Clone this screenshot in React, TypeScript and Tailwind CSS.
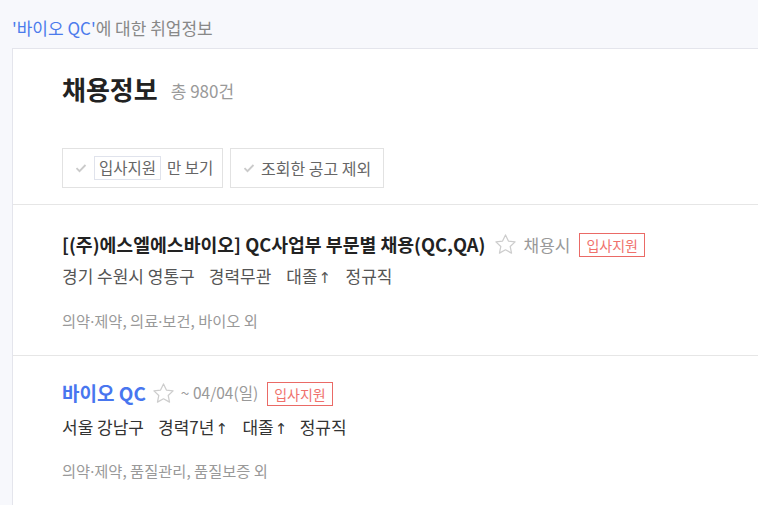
const font = { fontFamily: '"Noto Sans CJK KR", "Noto Sans", sans-serif' };

function Star() {
  return (
    <svg width="25" height="25" viewBox="0 0 24 24" className="-my-[3px] shrink-0">
      <path
        d="M12 2.8l2.8 5.9 6.4.8-4.7 4.4 1.3 6.4L12 17.1l-5.8 3.2 1.3-6.4-4.7-4.4 6.4-.8z"
        fill="none"
        stroke="#cdcdcd"
        strokeWidth="1.2"
        strokeLinejoin="round"
      />
    </svg>
  );
}

function Check() {
  return (
    <svg width="12" height="10" viewBox="0 0 12 10" className="shrink-0">
      <path d="M1.5 5.2l3 3 6-6.2" fill="none" stroke="#cacaca" strokeWidth="1.8" />
    </svg>
  );
}

function Dot() {
  return <span className="leading-none" style={{ fontFamily: '"Noto Sans", sans-serif' }}>·</span>;
}

// narrow arrow, the CJK one is full width
function Up() {
  return (
    <span className="ml-[1px] inline-block w-[9px] text-center text-[15px] leading-none" style={{ fontFamily: '"DejaVu Sans", sans-serif' }}>
      ↑
    </span>
  );
}

function ApplyBadge() {
  return (
    <span className="inline-flex h-[24px] items-center border border-[#ea6a66] px-[6px] text-[14px] leading-none text-[#f0716c]">
      입사지원
    </span>
  );
}

export default function App() {
  return (
    <div className="flex h-[505px] w-[758px] flex-col overflow-hidden bg-[#f7f8fc]" style={font}>
      <div className="flex h-[48px] items-center pl-[12px] pt-[6px] text-[17px] leading-none">
        <span className="text-[#4b7bec]">'바이오 QC'</span>
        <span className="text-[#888]">에 대한 취업정보</span>
      </div>

      <div className="ml-[12px] flex-1 border-l border-t border-[#e4e5ec] bg-white">
        <div className="px-[49px] pb-[16px]">
          <div className="flex h-[99px] items-start pt-[27px]">
            <h2 className="text-[26px] font-bold leading-none text-[#222]">채용정보</h2>
            <span className="ml-[13px] pt-[6px] text-[17px] leading-none text-[#999]">총 980건</span>
          </div>
          <div className="flex gap-[7px]">
            <button className="flex h-[40px] w-[161px] items-center border border-[#e2e2e2] pl-[12px] text-[15.5px] text-[#666]">
              <Check />
              <span className="ml-[7px] flex h-[24px] items-center border border-[#e0e3ec] px-[4px] leading-none">입사지원</span>
              <span className="ml-[6px] leading-none">만 보기</span>
            </button>
            <button className="flex h-[40px] w-[154px] items-center border border-[#e2e2e2] pl-[12px] text-[16px] leading-none text-[#666]">
              <Check />
              <span className="ml-[6px]">조회한 공고 제외</span>
            </button>
          </div>
        </div>

        <div className="border-t border-[#e6e6e6] px-[49px] pb-[26px] pt-[26px]">
          <div className="flex h-[26px] items-center">
            <span className="text-[18.3px] font-bold leading-[26px] text-[#222]">
              [(주)에스엘에스바이오] QC사업부 부문별 채용(QC,QA)
            </span>
            <span className="ml-[7px]"><Star /></span>
            <span className="ml-[6px] text-[17px] leading-none text-[#999]">채용시</span>
            <span className="ml-[9px]"><ApplyBadge /></span>
          </div>
          <div className="mt-[8px] flex h-[22px] items-center text-[17px] leading-[22px] text-[#555]">
            <span>경기 수원시 영통구</span>
            <span className="ml-[14px]">경력무관</span>
            <span className="ml-[15px]">대졸<Up /></span>
            <span className="ml-[18px]">정규직</span>
          </div>
          <div className="mt-[24px] flex h-[18px] items-center text-[15.3px] leading-[18px] text-[#999]">
            <span>의약<Dot />제약, 의료<Dot />보건, 바이오 외</span>
          </div>
        </div>

        <div className="border-t border-[#e6e6e6] px-[49px] pt-[24px]">
          <div className="flex h-[26px] items-center">
            <span className="text-[19px] font-bold leading-[26px] text-[#4876ef]">바이오 QC</span>
            <span className="ml-[5px]"><Star /></span>
            <span className="ml-[5px] text-[15.5px] leading-none text-[#999]">~ 04/04(일)</span>
            <span className="ml-[9px]"><ApplyBadge /></span>
          </div>
          <div className="mt-[10px] flex h-[22px] items-center text-[17px] leading-[22px] text-[#333]">
            <span>서울 강남구</span>
            <span className="ml-[14px]">경력7년<Up /></span>
            <span className="ml-[18px]">대졸<Up /></span>
            <span className="ml-[16px]">정규직</span>
          </div>
          <div className="mt-[23px] flex h-[18px] items-center text-[15.3px] leading-[18px] text-[#999]">
            <span>의약<Dot />제약, 품질관리, 품질보증 외</span>
          </div>
        </div>
      </div>
    </div>
  );
}
